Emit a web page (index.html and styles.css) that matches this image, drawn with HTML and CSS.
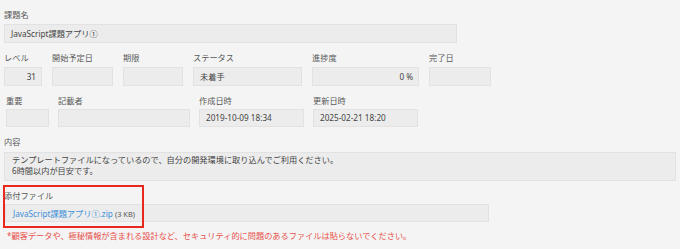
FILE: index.html
```html
<!DOCTYPE html>
<html lang="ja">
<head>
<meta charset="UTF-8">
<meta name="viewport" content="width=device-width, initial-scale=1.0">
<title>課題詳細</title>
<link rel="stylesheet" href="styles.css">
</head>
<body>
<div class="sheet">
  <div class="field">
    <label class="label">課題名</label>
    <div class="box title-box">JavaScript課題アプリ<span class="cjk">①</span></div>
  </div>

  <div class="row">
    <div class="field w-level">
      <label class="label">レベル</label>
      <div class="box num">31</div>
    </div>
    <div class="field w-start">
      <label class="label">開始予定日</label>
      <div class="box"></div>
    </div>
    <div class="field w-due">
      <label class="label">期限</label>
      <div class="box"></div>
    </div>
    <div class="field w-status">
      <label class="label">ステータス</label>
      <div class="box">未着手</div>
    </div>
    <div class="field w-progress">
      <label class="label">進捗度</label>
      <div class="box num">0 %</div>
    </div>
    <div class="field w-done">
      <label class="label">完了日</label>
      <div class="box"></div>
    </div>
  </div>

  <div class="row row-meta">
    <div class="field w-priority">
      <label class="label">重要</label>
      <div class="box"></div>
    </div>
    <div class="field w-author">
      <label class="label">記載者</label>
      <div class="box"></div>
    </div>
    <div class="field w-date">
      <label class="label">作成日時</label>
      <div class="box">2019-10-09 18:34</div>
    </div>
    <div class="field w-date">
      <label class="label">更新日時</label>
      <div class="box">2025-02-21 18:20</div>
    </div>
  </div>

  <div class="field field-content">
    <label class="label">内容</label>
    <div class="box content-box">テンプレートファイルになっているので、自分の開発環境に取り込んでご利用ください。<br>6時間以内が目安です。</div>
  </div>

  <div class="field attach">
    <label class="label">添付ファイル</label>
    <div class="box attach-box"><a href="#" class="file-link">JavaScript課題アプリ<span class="cjk">①</span>.zip</a> <span class="file-size">(3 KB)</span></div>
    <div class="highlight"></div>
  </div>

  <p class="notice">*顧客データや、極秘情報が含まれる設計など、セキュリティ的に問題のあるファイルは貼らないでください。</p>
</div>
</body>
</html>
```

FILE: styles.css
```css
body {
  margin: 0;
  background-color: #f4f4f4;
  font-family: "Noto Sans", "Noto Sans CJK JP", sans-serif;
  font-size: 8.2px;
  color: #444;
}
.cjk {
  font-family: "Noto Sans CJK JP", sans-serif;
}
.sheet {
  padding: 9px 0 0 4px;
}
.field {
  display: flex;
  flex-direction: column;
  margin-bottom: 9px;
}
.label {
  display: block;
  height: 12px;
  line-height: 12px;
  margin-bottom: 3px;
  color: #595959;
}
.box {
  box-sizing: border-box;
  height: 19px;
  line-height: 17px;
  padding: 0 6px;
  background-color: #ececec;
  border: 1px solid #e2e2e2;
  white-space: nowrap;
}
.num {
  text-align: right;
  padding-right: 5px;
}
.title-box {
  width: 453px;
}
.row {
  display: flex;
  gap: 10px;
}
.row-meta {
  gap: 9px;
  padding-left: 2px;
}
.row-meta .label {
  margin-bottom: 2px;
}
.row-meta .box {
  height: 18px;
  line-height: 16px;
}
.w-level { width: 38px; }
.w-start { width: 61px; }
.w-due { width: 60px; }
.w-status { width: 109px; }
.w-progress { width: 107px; }
.w-done { width: 62px; }
.w-priority { width: 43px; }
.w-author { width: 132px; }
.w-date { width: 105px; }
.field-content .label {
  margin-bottom: 4px;
}
.content-box {
  width: 672px;
  height: 29px;
  line-height: 10.5px;
  padding: 2px 7px 0;
  white-space: normal;
}
.attach {
  position: relative;
  margin-bottom: 8px;
}
.attach .label {
  margin-bottom: 2px;
}
.attach-box {
  width: 484px;
  height: 18px;
  line-height: 16px;
  margin-left: 1px;
  padding-left: 7px;
}
.file-link {
  color: #3d8fd9;
  text-decoration: none;
}
.file-size {
  color: #555;
  font-size: 7.4px;
}
.highlight {
  position: absolute;
  left: -1px;
  top: -5px;
  width: 141px;
  height: 43px;
  box-sizing: border-box;
  border: 2px solid #e8271d;
}
.notice {
  margin: 0;
  padding-left: 3px;
  line-height: 12px;
  color: #e8514b;
}
```
